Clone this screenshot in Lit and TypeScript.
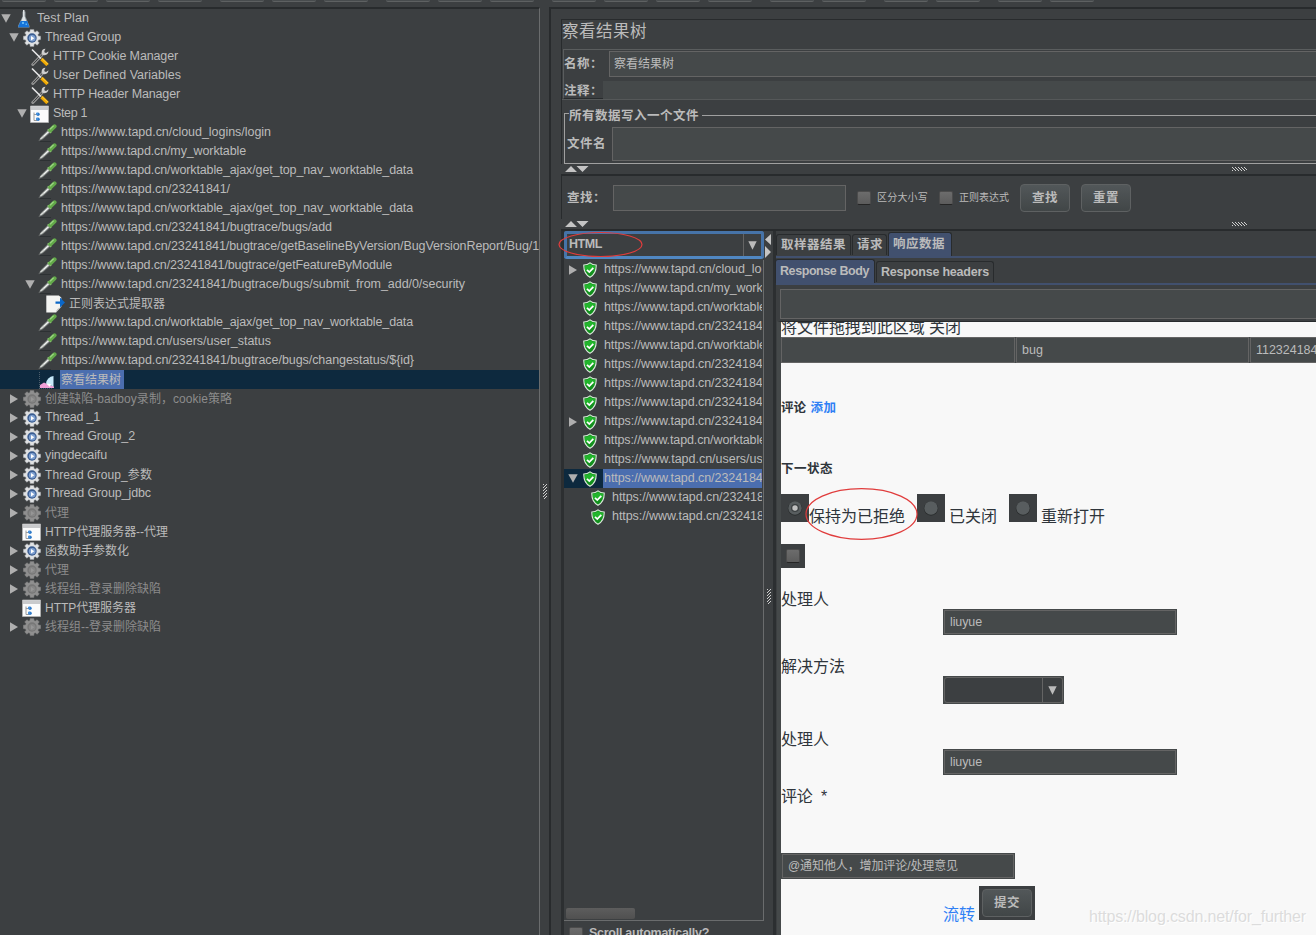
import { LitElement, html, css, nothing } from "lit";
import { customElement, property } from "lit/decorators.js";
import { classMap } from "lit/directives/class-map.js";

/** Text run whose tracking is spread so that it occupies a given width. */
@customElement("fit-text")
class FitText extends LitElement {
  @property() text = "";
  @property({ type: Number }) w = 0;
  static styles = css`
    :host { display: inline-block; white-space: pre; }
    .run { display: inline-block; white-space: pre; }
  `;
  updated() {
    const run = this.renderRoot.querySelector(".run") as HTMLElement;
    run.style.letterSpacing = "0px";
    const natural = run.getBoundingClientRect().width;
    const n = [...this.text].length;
    if (this.w && n > 0) run.style.letterSpacing = `${(this.w - natural) / n}px`;
  }
  render() {
    return html`<span class="run">${this.text}</span>`;
  }
}

type IconName = "flask" | "gear" | "gearOff" | "tools" | "window" | "pipette" | "extract" | "chart" | "shield";

const gear = (rim: string, edge: string, core: string, hub: string, tri: string) => html`
  <svg width="18" height="18" viewBox="0 0 18 18">
    <path fill=${rim} stroke=${edge} stroke-width=".5" d="M7.2 .4h3.6l.3 2.2 1.2.5 1.8-1.4 2.2 2.2-1.4 1.8.5 1.2 2.3.3v3.4l-2.3.4-.5 1.2 1.4 1.8-2.2 2.2-1.8-1.4-1.2.5-.3 2.3H7.2l-.3-2.3-1.2-.5-1.8 1.4L1.700 14l1.400-1.800-.5-1.200-2.300-.4V7.200l2.300-.3.5-1.200L1.700 3.900l2.200-2.200 1.800 1.400 1.200-.5z"/>
    <circle cx="9" cy="9" r="4.700" fill=${core}/>
    <circle cx="9.200" cy="9.300" r="3.300" fill=${hub}/>
    <path d="M8 7l3.300 2.200L8 11.400z" fill=${tri}/>
  </svg>`;

const icons: Record<IconName, () => unknown> = {
  flask: () => html`<svg width="18" height="18" viewBox="0 0 18 18">
    <path d="M7.500 1.500h3V6.500L14.500 16v1.500H3V16L7.500 6.500z" fill="#8d979d"/>
    <path d="M8 0h1.500v6l1.700 5H6.300L8 6.500z" fill="#dfe3e5"/>
    <path d="M5.600 11h6.600L14 16.200v1H3.500v-1z" fill="#1674da"/>
    <path d="M7 12h2v2H7zM10.500 13.500H12V15h-1.500z" fill="#5cb4f4"/></svg>`,
  gear: () => gear("#dfe1e3", "#9a9da0", "#3a5c90", "#7d9fd0", "#fff"),
  gearOff: () => gear("#8f8f8f", "#7d7d7d", "#777", "#868686", "#969696"),
  tools: () => html`<svg width="18" height="18" viewBox="0 0 18 18">
    <path d="M1.800 16.500l10-10.500" stroke="#949494" stroke-width="3" stroke-linecap="round"/>
    <path d="M2 16.200l9.500-10" stroke="#3d3f40" stroke-width="1"/>
    <path d="M14.500.700q-3.800.3-3.900 3.800l.6 2.300 2.500.4q3.600-.4 3.800-4l-2.400 1.700-1.500-.4-.3-1.500z" fill="#cfcfcf"/>
    <path d="M1 1.500l9 9" stroke="#e8e8e8" stroke-width="1.600"/>
    <path d="M10.500 11l6 6" stroke="#f0a800" stroke-width="3.300"/>
    <path d="M10.700 10.400l6.500 6" stroke="#ffd34a" stroke-width=".9"/></svg>`,
  window: () => html`<svg class="wide" width="19" height="18" viewBox="0 0 19 18">
    <path d="M.5 1h18v16.500H.5z" fill="#fbfbfb" stroke="#b9b9b9" stroke-width=".7"/>
    <path d="M1 1.200h17V5H1z" fill="#c9cacc"/>
    <path d="M4 7.500v8h3M4 9.500h3" stroke="#9a9a9a" fill="none"/>
    <circle cx="8" cy="9.200" r="1.700" fill="#2d79c8"/><circle cx="8" cy="14.300" r="1.800" fill="#2d79c8"/><path d="M6 7.800h2v2H6zM6 12.800h2v2H6z" fill="#4b94dd"/></svg>`,
  pipette: () => html`<svg class="wide" width="19" height="18" viewBox="0 0 19 18">
    <path d="M2 17.600h11" stroke="#2d3032"/>
    <path d="M.7 16.900l2.200-4 6.800-6.600 2.500 2.300-7.200 6.400z" fill="#8f9391" stroke="#5b5e5f" stroke-width=".5"/>
    <path d="M2.500 15l3-2.500" stroke="#d8dbd8" stroke-width="1.300"/>
    <path d="M5.500 12.500l5-4.700" stroke="#f2f4f2" stroke-width="1.200"/>
    <path d="M9.800 5.400l3.400 3.300" stroke="#8cc274" stroke-width="2"/>
    <path d="M12.500 6.200L16.600 2.300" stroke="#63a94a" stroke-width="4" stroke-linecap="round"/>
    <path d="M12 5.300l3.600-3.500" stroke="#9dd784" stroke-width="1.200"/></svg>`,
  extract: () => html`<svg class="wide" width="19" height="18" viewBox="0 0 19 18">
    <path d="M.3.5h12.500l2.500 2v9L10 17.500H.3z" fill="#f4f4f2"/>
    <path d="M10 17.500q0-4 5.300-5.500z" fill="#bdbdbb"/>
    <path d="M9.500 6.500h4.500V2.500l5 5-5 5V8.700H9.500z" fill="#0b67c8"/></svg>`,
  chart: () => html`<svg class="wide" width="19" height="18" viewBox="0 0 19 18">
    <path d="M1.500 1v16.500M1 17.300h14" stroke="#79838a" stroke-width=".6" stroke-dasharray="1 1"/>
    <path d="M2 17v-3l4-2.500 3 1.500 7 2.500V17z" fill="#ef9fd7"/>
    <path d="M8 12.500Q9 6 15.500 5v10.500z" fill="#c7eafa"/><path d="M8 12.500l5 .5-1 3z" fill="#fff"/></svg>`,
  shield: () => html`<svg width="14" height="16" viewBox="0 0 14 16">
    <path d="M7 .8Q9.500 2.900 13.200 3q.3 8.700-6.200 12.300Q.5 11.700.8 3 4.500 2.900 7 .8z" fill="#12911d" stroke="#dce8dc" stroke-width="1.100"/>
    <path d="M7 2.300Q9 3.900 12 4.100q0 2-.6 4L2.300 9.600Q1.800 7 2 4.100 5 3.900 7 2.300z" fill="#22b52c"/>
    <path d="M4 7.800l2.300 2.300 4-4.300" fill="none" stroke="#fff" stroke-width="1.700"/></svg>`,
};

interface TreeNode {
  level: number;
  icon: IconName;
  text: string;
  w: number;
  arrow?: "open" | "closed";
  off?: boolean;
  selected?: boolean;
}

const HOST = "https://www.tapd.cn/";
const url = (path: string, w: number, arrow?: "open" | "closed"): TreeNode => ({ level: 3, icon: "pipette", text: HOST + path, w, arrow });

const PLAN: TreeNode[] = [
  { level: 0, icon: "flask", text: "Test Plan", w: 52, arrow: "open" },
  { level: 1, icon: "gear", text: "Thread Group", w: 76, arrow: "open" },
  { level: 2, icon: "tools", text: "HTTP Cookie Manager", w: 125 },
  { level: 2, icon: "tools", text: "User Defined Variables", w: 128 },
  { level: 2, icon: "tools", text: "HTTP Header Manager", w: 127 },
  { level: 2, icon: "window", text: "Step 1", w: 34, arrow: "open" },
  url("cloud_logins/login", 210),
  url("my_worktable", 185),
  url("worktable_ajax/get_top_nav_worktable_data", 352),
  url("23241841/", 169),
  url("worktable_ajax/get_top_nav_worktable_data", 352),
  url("23241841/bugtrace/bugs/add", 271),
  url("23241841/bugtrace/getBaselineByVersion/BugVersionReport/Bug/1", 478),
  url("23241841/bugtrace/getFeatureByModule", 331),
  url("23241841/bugtrace/bugs/submit_from_add/0/security", 404, "open"),
  { level: 4, icon: "extract", text: "正则表达式提取器", w: 96 },
  url("worktable_ajax/get_top_nav_worktable_data", 352),
  url("users/user_status", 210),
  url("23241841/bugtrace/bugs/changestatus/${id}", 353),
  { level: 3, icon: "chart", text: "察看结果树", w: 60, selected: true },
  { level: 1, icon: "gearOff", text: "创建缺陷-badboy录制，cookie策略", w: 187, arrow: "closed", off: true },
  { level: 1, icon: "gear", text: "Thread _1", w: 55, arrow: "closed" },
  { level: 1, icon: "gear", text: "Thread Group_2", w: 90, arrow: "closed" },
  { level: 1, icon: "gear", text: "yingdecaifu", w: 62, arrow: "closed" },
  { level: 1, icon: "gear", text: "Thread Group_参数", w: 107, arrow: "closed" },
  { level: 1, icon: "gear", text: "Thread Group_jdbc", w: 106, arrow: "closed" },
  { level: 1, icon: "gearOff", text: "代理", w: 24, arrow: "closed", off: true },
  { level: 1, icon: "window", text: "HTTP代理服务器--代理", w: 123 },
  { level: 1, icon: "gear", text: "函数助手参数化", w: 84, arrow: "closed" },
  { level: 1, icon: "gearOff", text: "代理", w: 24, arrow: "closed", off: true },
  { level: 1, icon: "gearOff", text: "线程组--登录删除缺陷", w: 116, arrow: "closed", off: true },
  { level: 1, icon: "window", text: "HTTP代理服务器", w: 91 },
  { level: 1, icon: "gearOff", text: "线程组--登录删除缺陷", w: 116, arrow: "closed", off: true },
];

const res = (path: string, w: number, extra: Partial<TreeNode> = {}): TreeNode => ({ level: 0, icon: "shield", text: HOST + path, w, ...extra });
const RESULTS: TreeNode[] = [
  res("cloud_logins/login", 210, { arrow: "closed" }),
  res("my_worktable", 185),
  res("worktable_ajax/get_top_nav_worktable_data", 352),
  res("23241841/", 169),
  res("worktable_ajax/get_top_nav_worktable_data", 352),
  res("23241841/", 169),
  res("23241841/", 169),
  res("23241841/", 169),
  res("23241841/", 169, { arrow: "closed" }),
  res("worktable_ajax/get_top_nav_worktable_data", 352),
  res("users/user_status", 210),
  res("23241841/", 169, { arrow: "open", selected: true }),
  res("23241841/", 169, { level: 1 }),
  res("23241841/", 169, { level: 1 }),
];

const arrow = (kind?: "open" | "closed") =>
  kind === "open"
    ? html`<svg width="10" height="9" viewBox="0 0 10 9"><path d="M.3.3h9.400L5 8.700z" fill="#afafaf"/></svg>`
    : kind === "closed"
      ? html`<svg width="10" height="10" viewBox="0 0 10 10"><path d="M1 .3v9.400L9 5z" fill="#afafaf"/></svg>`
      : nothing;

const dots = (cols: number, rows: number, dir: number) => {
  let d = "";
  for (let y = 0; y < rows; y++)
    for (let x = 0; x < cols; x++) if ((((x - dir * y) % 3) + 3) % 3 === 0) d += `M${x} ${y}h1v1h-1z`;
  return d;
};
const grip = html`<svg width="15" height="4" viewBox="0 0 15 4"><path d=${dots(15, 4, 1)} fill="#d0d0d0"/></svg>`;
const vgrip = html`<svg width="4" height="15" viewBox="0 0 4 15"><path d=${dots(4, 15, -1)} fill="#d0d0d0"/></svg>`;
const upDown = html`<svg width="24" height="6" viewBox="0 0 24 6"><path d="M0 6h12L6 0zM11.500 0h12l-6 6z" fill="#c4c4c4"/></svg>`;
const comboArrow = html`<svg width="9" height="9" viewBox="0 0 9 9"><path d="M.3.300h8.400L4.500 8.700z" fill="#bbb"/></svg>`;

@customElement("app-root")
class AppRoot extends LitElement {
  static styles = css`
    * { box-sizing: border-box; }
    :host {
      display: flex; flex-direction: column; position: relative; width: 1316px; height: 935px; overflow: hidden;
      background: #3c3f41; color: #bbb; white-space: nowrap;
      font: 12.5px/18px "Liberation Sans", "Noto Sans CJK SC", sans-serif;
    }
    svg { display: block; flex: none; }
    .wide { margin-left: -1px; }
    fit-text { flex: none; }
    .cjk { font-size: 12px; }
    .b { font-weight: bold; font-size: 12.5px; }
    .toolbar { display: flex; gap: 18px; height: 7px; padding-left: 2px; flex: none; }
    .group { display: flex; gap: 8px; }
    .tool { width: 44px; height: 2px; background: #484c4e; border-bottom: 1px solid #5e6162; border-radius: 0 0 3px 3px; }
    .main { display: flex; flex: 1; min-height: 0; }
    .plan { width: 540px; border-top: 2px solid #282b2d; border-right: 1px solid #6a6c6d; overflow: hidden; flex: none; }
    .row { display: flex; align-items: center; height: 19px; padding-left: calc(var(--lv) * 8px + 1px); }
    .row.sel { background: #0d293e; }
    .lv1 { --lv: 1; } .lv2 { --lv: 2; } .lv3 { --lv: 3; } .lv4 { --lv: 4; } .lv0 { --lv: 0; }
    .tog { width: 14px; flex: none; display: flex; }
    .ico { width: 20px; flex: none; display: flex; }
    .lab { height: 19px; line-height: 18px; padding: 0 3px 0 1px; margin-left: 1px; }
    .lab.cjk { line-height: 20px; }
    .off .lab { color: #8c8c8c; }
    .sel .lab { background: #4b6eaf; }
    .split { width: 9px; flex: none; display: flex; align-items: center; padding: 40px 0 0 3px; }
    .right { flex: 1; min-width: 0; border-left: 2px solid #282b2d; border-top: 2px solid #282b2d; padding: 10px 0 0 10px; display: flex; flex-direction: column; }
    .head { height: 145px; border-left: 1px solid #282b2d; border-top: 1px solid #282b2d; display: flex; flex-direction: column; flex: none; }
    .title { height: 29px; font-size: 16.500px; line-height: 23px; flex: none; }
    .names { height: 50px; margin-left: 1px; border-top: 1px solid #5a5d5e; border-left: 1px solid #5a5d5e; border-bottom: 1px solid #282b2d; flex: none; }
    .name { display: flex; align-items: center; height: 27px; padding-top: 1px; }
    .name .b { width: 45px; }
    .field { background: #45494a; border: 1px solid #646464; }
    .name .field { flex: 1; height: 26px; padding-left: 4px; line-height: 24px; border-right: 0; }
    .note { display: flex; align-items: center; height: 22px; padding-top: 3px; }
    .note .b { width: 39px; padding-top: 2px; }
    .note .fill { flex: 1; height: 18px; background: #45494a; }
    .filebox { margin-top: 0; border-top: 1px solid #555859; height: 65px; padding: 6px 0 0 2px; display: flex; flex-direction: column; flex: none; }
    .legend { display: flex; align-items: center; height: 18px; flex: none; }
    .legend::before { content: ""; width: 4px; height: 10px; align-self: flex-end; border: 1px solid #a0a0a0; border-width: 1px 0 0 1px; }
    .legend::after { content: ""; flex: 1; height: 1px; background: #a0a0a0; margin-left: 3px; }
    .legend fit-text { padding-top: 1px; }
    .file { display: flex; align-items: center; flex: 1; border-left: 1px solid #a0a0a0; border-bottom: 1px solid #a0a0a0; padding: 3px 0 2px 2px; }
    .file .b { width: 45px; }
    .file .field { flex: 1; height: 34px; border-right: 0; }
    .bar { height: 10px; display: flex; align-items: center; justify-content: space-between; padding: 0 69px 0 4px; flex: none; }
    .search { height: 45px; border-top: 2px solid #282b2d; border-left: 1px solid #282b2d; display: flex; align-items: center; padding: 1px 0 0 5px; flex: none; }
    .search .field { width: 233px; height: 26px; }
    .search > .b { width: 46px; }
    .s1 { margin: 0 6px 0 11px; }
    .s2 { margin: 0 11px; }
    .box { width: 14px; height: 14px; border: 1px solid #4c4c4c; border-bottom-color: #252525; background: linear-gradient(#6c6c6c, #5c5c5c); border-radius: 2px; flex: none; }
    .small { font-size: 10px; }
    .btn { width: 50px; height: 28px; border: 1px solid #5e6162; border-radius: 4px; background: linear-gradient(#525759, #414647); display: flex; align-items: center; justify-content: center; }
    .bottom { flex: 1; min-height: 0; display: flex; border-top: 2px solid #282b2d; }
    .results { width: 203px; border-left: 3px solid #2c2f31; display: flex; flex-direction: column; flex: none; }
    .combo { height: 28px; width: 200px; border: 3px solid #4673a8; border-bottom-color: #5087c2; border-radius: 3px; display: flex; align-items: center; padding-left: 2px; flex: none; }
    .combo .val { flex: 1; margin-top: -2px; }
    .combo .drop { width: 18px; border-left: 1px solid #646464; height: 22px; display: flex; align-items: center; justify-content: center; }
    .list { height: 661px; margin-top: 1px; border-right: 1px solid #6a6c6d; border-bottom: 1px solid #6a6c6d; display: flex; flex-direction: column; overflow: hidden; flex: none; padding-right: 1px; }
    .list .row { padding-left: calc(var(--lv) * 8px + 4px); overflow: hidden; flex: none; }
    .list .tog { width: 15px; } .list .ico { width: 19px; }
    .list .row.sel .lab { flex: 1; }
    .thumb { margin: auto 0 1px 2px; width: 69px; height: 11px; border-radius: 2px; background: linear-gradient(#5d5d5d, #505050); flex: none; }
    .auto { display: flex; gap: 6px; padding: 3px 0 0 5px; }
    .auto .box { margin-top: 3px; }
    .mid { width: 9px; flex: none; display: flex; flex-direction: column; padding: 3px 0 0 1px; }
    .mid .vg { margin: 331px 0 0 2px; }
    .detail { flex: 1; min-width: 0; border-left: 3px solid #2c2f31; display: flex; flex-direction: column; }
    .tabs { display: flex; align-items: flex-end; height: 27px; border-bottom: 2px solid #41506e; flex: none; gap: 1px; }
    .tab { border: 1px solid #282b2d; border-bottom: 0; border-radius: 3px 3px 0 0; padding-left: 4px; height: 21px; line-height: 21px; margin-bottom: 1px; background: #3c3f41; }
    .tab.on { background: #41506e; height: 24px; line-height: 23px; margin-bottom: 0; }
    .sub { margin-top: 2px; height: 25px; }
    .sub .tab.on { line-height: 22px; }
    .w1 { width: 75px; } .w2 { width: 35px; } .w3 { width: 64px; } .w4 { width: 100px; margin-left: -1px; } .w5 { width: 118px; }
    .find { height: 30px; margin: 4px 0 2px 4px; flex: none; border-right: 0; }
    .page { flex: 1; min-height: 0; margin-left: 1px; border-left: 4px solid #45494a; border-top: 1px solid #282b2d; background: #f8f8f8; color: #2f353b; font-size: 16px; line-height: 20px; overflow: hidden; }
    .clip { height: 15px; overflow: hidden; }
    .clip fit-text { margin-top: -6px; line-height: 22px; }
    .clip { line-height: 0; }
    .clip fit-text { margin-top: -5px; }
    .strip { display: flex; gap: 1px; background: #45494a; width: 600px; }
    .pf { height: 26px; width: 234px; background: #45494a; border: 1px solid #45494a; outline: 1px solid #646464; outline-offset: -2px; color: #bbb; font-size: 12.500px; line-height: 24px; padding-left: 6px; }
    .pf.last { line-height: 25px; }
    .strip .pf { width: 233px; padding-left: 5px; flex: none; outline-offset: -1px; }
    .strip .pf:first-child { width: 234px; }
    .link { color: #2f80f5; }
    .h1 { margin-top: 34px; height: 20px; } .h2 { margin-top: 41px; height: 20px; }
    .radios { display: flex; margin-top: 16px; height: 34px; }
    .rad { width: 28px; height: 28px; background: #3c3f41; display: flex; align-items: center; justify-content: center; }
    .radios fit-text { margin-top: 13px; }
    .g1 { margin-left: 12px; } .g2 { margin-left: 4px; } .g3 { margin-left: 4px; }
    .chk { width: 24px; height: 24px; background: #3c3f41; margin-top: 16px; padding: 5px; }
    .l1 { margin-top: 21px; padding-top: 1px; height: 20px; }
    .l3 { margin-top: 25px; }
    .l4 { margin: 12px 0 46px; height: 20px; }
    .in { margin-left: 162px; }
    .sel2 { width: 121px; height: 28px; background: #45494a; padding: 1px; margin-top: 0; }
    .sel2 > div { background: #3c3f41; border: 1px solid #646464; border-radius: 3px; height: 26px; display: flex; justify-content: flex-end; }
    .sel2 .drop { width: 20px; border-left: 1px solid #646464; display: flex; align-items: center; justify-content: center; }
    .foot { display: flex; margin: 7px 0 0 162px; }
    .foot .link { margin-top: 19px; }
    .submit { width: 56px; height: 34px; background: #3c3f41; margin-left: 4px; padding: 3px; color: #bbb; }
    .submit .btn { height: 28px; }
    .over { position: absolute; left: 0; top: 0; pointer-events: none; }
    .mark { position: absolute; left: 1089px; top: 907px; font-size: 16px; line-height: 20px; color: #dcdcdc; text-shadow: 1px 1px 0 #fff; }
  `;

  row(n: TreeNode) {
    const cjk = /[\u4e00-\u9fff]/.test(n.text);
    return html`<div class=${classMap({ row: true, [`lv${n.level}`]: true, sel: !!n.selected, off: !!n.off })}>
      <span class="tog">${arrow(n.arrow)}</span><span class="ico">${icons[n.icon]()}</span>
      <span class=${classMap({ lab: true, cjk })}><fit-text .text=${n.text} .w=${n.w}></fit-text></span>
    </div>`;
  }
  t(text: string, w: number, cls = "") {
    return html`<fit-text class=${cls} .text=${text} .w=${w}></fit-text>`;
  }
  radio(on = false) {
    return html`<svg width="16" height="16" viewBox="0 0 16 16"><circle cx="8" cy="8.500" r="7.200" fill="#2a2d2e"/><circle cx="8" cy="8" r="6.700" fill="#585d5f"/>${on ? html`<svg><circle cx="8" cy="8" r="4" fill="#3c4042"/><circle cx="8" cy="8" r="2.700" fill="#c0c0c0"/></svg>` : nothing}</svg>`;
  }

  render() {
    return html`
      <div class="toolbar">
        ${[4, 3, 3, 4, 2, 2, 2].map((n) => html`<div class="group">${Array.from({ length: n }, () => html`<i class="tool"></i>`)}</div>`)}
      </div>
      <div class="main">
        <div class="plan">${PLAN.map((n) => this.row(n))}</div>
        <div class="split">${vgrip}</div>
        <div class="right">
          <div class="head">
            <div class="title">${this.t("察看结果树", 85)}</div>
            <div class="names">
              <div class="name">${this.t("名称：", 39, "b")}<div class="field">${this.t("察看结果树", 60, "cjk")}</div></div>
              <div class="note">${this.t("注释：", 39, "b")}<div class="fill"></div></div>
            </div>
            <div class="filebox">
              <div class="legend">${this.t("所有数据写入一个文件", 130, "b")}</div>
              <div class="file">${this.t("文件名", 39, "b")}<div class="field"></div></div>
            </div>
          </div>
          <div class="bar">${upDown}${grip}</div>
          <div class="search">
            ${this.t("查找：", 39, "b")}<div class="field"></div>
            <i class="box s1"></i>${this.t("区分大小写", 51, "small")}
            <i class="box s1"></i>${this.t("正则表达式", 50, "small")}
            <div class="btn s2">${this.t("查找", 26, "b")}</div><div class="btn s3">${this.t("重置", 26, "b")}</div>
          </div>
          <div class="bar">${upDown}${grip}</div>
          <div class="bottom">
            <div class="results">
              <div class="combo"><span class="val">${this.t("HTML", 33, "b")}</span><span class="drop">${comboArrow}</span></div>
              <div class="list">${RESULTS.map((n) => this.row(n))}<div class="thumb"></div></div>
              <div class="auto"><i class="box"></i>${this.t("Scroll automatically?", 120, "b")}</div>
            </div>
            <div class="mid">
              <svg width="6" height="24" viewBox="0 0 6 24"><path d="M6 0v11L0 5.500zM0 12v12l6-6z" fill="#c4c4c4"/></svg>
              <span class="vg">${vgrip}</span>
            </div>
            <div class="detail">
              <div class="tabs">
                <div class="tab w1">${this.t("取样器结果", 65, "b")}</div><div class="tab w2">${this.t("请求", 26, "b")}</div><div class="tab on w3">${this.t("响应数据", 52, "b")}</div>
              </div>
              <div class="tabs sub">
                <div class="tab on w4">${this.t("Response Body", 89, "b")}</div><div class="tab w5">${this.t("Response headers", 108, "b")}</div>
              </div>
              <div class="field find"></div>
              <div class="page">
                <div class="clip">${this.t("将文件拖拽到此区域 关闭", 180)}</div>
                <div class="strip"><div class="pf"></div><div class="pf">${this.t("bug", 21)}</div><div class="pf">${this.t("1123241841001000", 110)}</div></div>
                <div class="h1">${this.t("评论", 25, "b")} ${this.t("添加", 26, "b link")}</div>
                <div class="h2">${this.t("下一状态", 52, "b")}</div>
                <div class="radios">
                  <div class="rad">${this.radio(true)}</div>${this.t("保持为已拒绝", 96)}
                  <div class="rad g1">${this.radio()}</div>${this.t("已关闭", 48, "g2")}
                  <div class="rad g1">${this.radio()}</div>${this.t("重新打开", 64, "g3")}
                </div>
                <div class="chk"><div class="box"></div></div>
                <div class="l1">${this.t("处理人", 48)}</div>
                <div class="pf in">${this.t("liuyue", 32)}</div>
                <div class="l1">${this.t("解决方法", 64)}</div>
                <div class="in sel2"><div><span class="drop">${comboArrow}</span></div></div>
                <div class="l1 l3">${this.t("处理人", 48)}</div>
                <div class="pf in">${this.t("liuyue", 32)}</div>
                <div class="l4">${this.t("评论  *", 46)}</div>
                <div class="pf last">${this.t("@通知他人，增加评论/处理意见", 170, "cjk")}</div>
                <div class="foot">${this.t("流转", 32, "link")}<div class="submit"><div class="btn">${this.t("提交", 26, "b")}</div></div></div>
              </div>
            </div>
          </div>
        </div>
      </div>
      <svg class="over" width="1316" height="935" viewBox="0 0 1316 935" fill="none" stroke="#e03c3c" stroke-width="1.200">
        <ellipse cx="600.500" cy="244.500" rx="41.500" ry="12"/><ellipse cx="861.500" cy="514" rx="55.500" ry="25.300"/>
      </svg>
      <div class="mark">${this.t("https://blog.csdn.net/for_further", 217)}</div>
    `;
  }
}
